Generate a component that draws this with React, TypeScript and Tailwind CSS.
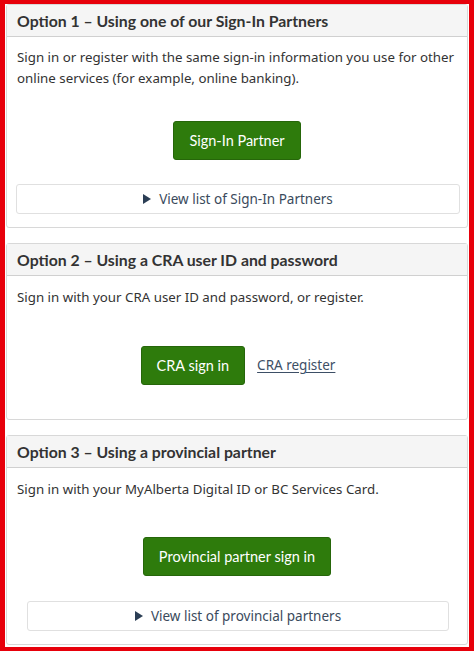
const body = { fontFamily: '"Noto Sans", "Open Sans", sans-serif' };
const heading = { fontFamily: 'Lato, "Noto Sans", sans-serif' };

function Panel({ title, children }: { title: string; children: React.ReactNode }) {
  return (
    <section className="border border-[#d8d8d8] rounded-[3px] bg-white">
      <h2
        style={heading}
        className="bg-[#f5f5f5] border-b border-[#d0d0d0] px-[10px] h-[32px] flex items-center text-[15.8px] font-bold text-[#333]"
      >
        {title}
      </h2>
      <div className="px-[10px]">{children}</div>
    </section>
  );
}

function GreenButton({ label }: { label: string }) {
  return (
    <button
      style={heading}
      className="h-[39px] px-[15px] rounded-[3px] bg-[#2e7b0c] border border-[#26660a] text-white text-[14.5px]"
    >
      {label}
    </button>
  );
}

function Summary({ label, className }: { label: string; className: string }) {
  return (
    <div
      className={`h-[30px] border border-[#e0e0e0] rounded-[3px] flex items-center justify-center gap-[8px] text-[13.5px] text-[#3a4a5c] ${className}`}
    >
      <svg width="8" height="10" viewBox="0 0 8 10">
        <path d="M0 0 L8 5 L0 10 Z" fill="#2b3e55" />
      </svg>
      <span>{label}</span>
    </div>
  );
}

export default function App() {
  return (
    <div style={body} className="w-[474px] h-[651px] border-red-600 border-l-[5px] border-r-[5px] border-t-[4px] border-b-[4px] bg-white pl-[1px] pr-[1px] text-[#333]">
      <div className="flex flex-col gap-[15px]">
        <Panel title="Option 1 – Using one of our Sign-In Partners">
          <p className="mt-[10px] text-[13.3px] leading-[21px]">
            Sign in or register with the same sign-in information you use for other online services (for example, online banking).
          </p>
          <div className="flex justify-center mt-[32px]">
            <GreenButton label="Sign-In Partner" />
          </div>
          <Summary label="View list of Sign-In Partners" className="mt-[24px] mb-[13px] -ml-[1px] mr-[-3px]" />
        </Panel>
        <Panel title="Option 2 – Using a CRA user ID and password">
          <p className="mt-[11px] text-[13.3px] leading-[21px]">
            Sign in with your CRA user ID and password, or register.
          </p>
          <div className="flex justify-center items-center gap-[12px] mt-[38px] mb-[34px] pl-[2px]">
            <GreenButton label="CRA sign in" />
            <a href="#" className="text-[13.5px] text-[#3d4f66] underline underline-offset-2">
              CRA register
            </a>
          </div>
        </Panel>
        <Panel title="Option 3 – Using a provincial partner">
          <p className="mt-[11px] text-[13.3px] leading-[21px]">
            Sign in with your MyAlberta Digital ID or BC Services Card.
          </p>
          <div className="flex justify-center mt-[37px]">
            <GreenButton label="Provincial partner sign in" />
          </div>
          <Summary label="View list of provincial partners" className="mt-[25px] mb-[13px] ml-[10px] mr-[8px]" />
        </Panel>
      </div>
    </div>
  );
}
